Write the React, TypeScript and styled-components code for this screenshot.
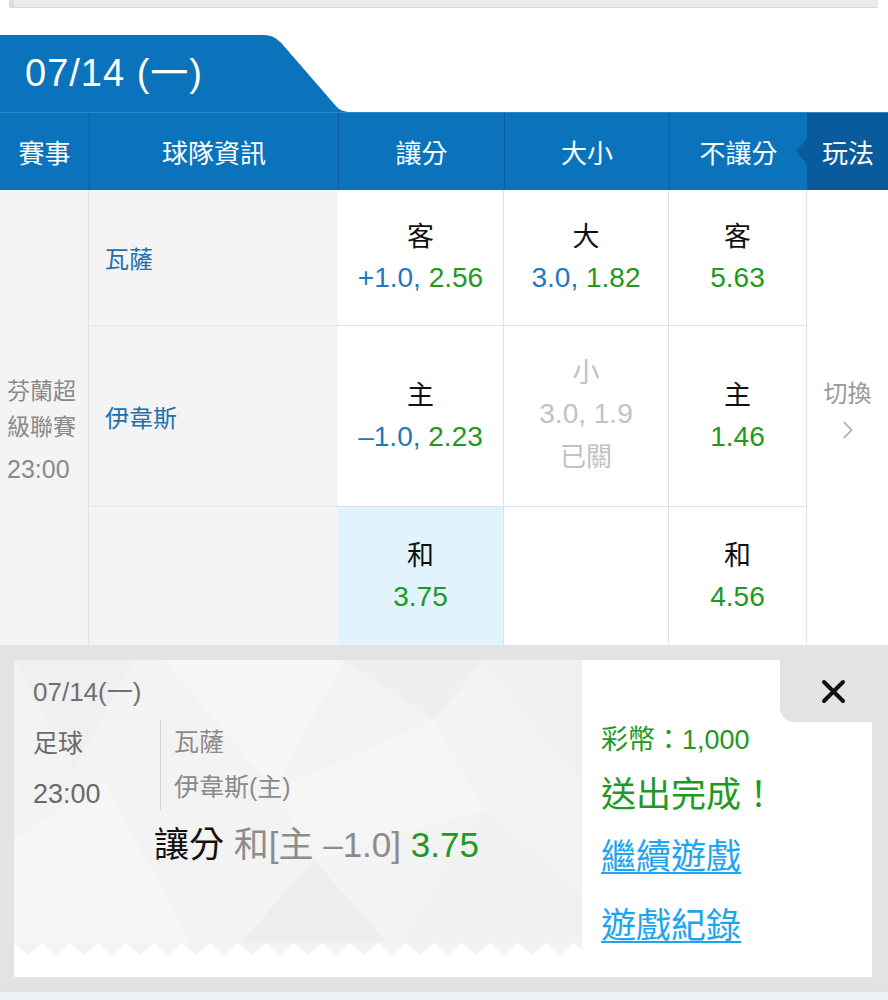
import React from "react";
import styled, { createGlobalStyle } from "styled-components";
import { ChevronRight } from "lucide-react";

const BLUE = "#0b73bc";
const DARK_BLUE = "#0a5b9c";
const GREEN = "#1e9a22";
const LINE = "#dde3ea";

const GlobalStyle = createGlobalStyle`
  html, body {
    margin: 0;
    padding: 0;
    background: #fff;
  }
  body {
    font-family: "Liberation Sans", "Noto Sans CJK TC", sans-serif;
    width: 888px;
    height: 1000px;
    overflow: hidden;
  }
`;

const Page = styled.div`
  width: 888px;
  height: 1000px;
  display: flex;
  flex-direction: column;
  background: #fff;
`;

const TopStrip = styled.div`
  margin: 0 10px 0 9px;
  height: 7px;
  background: #ececec;
  border-left: 5px solid #dedede;
  border-bottom: 1px solid #d9d9d9;
`;

const TabRow = styled.div`
  margin-top: 27px;
  height: 77px;
  display: flex;
`;

const DateTab = styled.div`
  width: 237px;
  padding: 0 0 8px 25px;
  background: ${BLUE};
  color: #fff;
  font-size: 38px;
  letter-spacing: 1px;
  display: flex;
  align-items: center;
`;

const HeaderRow = styled.div`
  display: grid;
  grid-template-columns: 89px 249px 166px 165px 138px 81px;
  height: 78px;
  background: ${BLUE};
  border-top: 1px solid #2a86c8;
  box-sizing: border-box;
`;

const HeadCell = styled.div<{ $dark?: boolean }>`
  position: relative;
  display: flex;
  align-items: center;
  justify-content: center;
  color: #fff;
  font-size: 26px;
  background: ${(p) => (p.$dark ? DARK_BLUE : "transparent")};
  & + & {
    border-left: 1px solid ${(p) => (p.$dark ? DARK_BLUE : "#5aa2d8")};
  }
`;

const Notch = styled.span`
  position: absolute;
  left: -12px;
  top: 24px;
  width: 0;
  height: 0;
  border-top: 14px solid transparent;
  border-bottom: 14px solid transparent;
  border-right: 12px solid ${DARK_BLUE};
`;

const Board = styled.div`
  display: grid;
  grid-template-columns: 89px 249px 166px 165px 138px 81px;
  grid-template-rows: 136px 181px 138px;
`;

const LeagueCell = styled.div`
  grid-column: 1;
  grid-row: 1 / 4;
  background: #f4f4f4;
  border-right: 1px solid ${LINE};
  display: flex;
  flex-direction: column;
  justify-content: center;
  padding: 24px 0 0 7px;
  color: #8a8a8a;
  font-size: 23px;
  line-height: 36px;
`;

const LeagueTime = styled.div`
  margin-top: 6px;
  font-size: 25px;
`;

const TeamCell = styled.div<{ $row: number }>`
  grid-column: 2;
  grid-row: ${(p) => p.$row};
  background: #f4f4f4;
  border-bottom: ${(p) => (p.$row < 3 ? `1px solid ${LINE}` : "none")};
  display: flex;
  align-items: center;
  padding-left: 16px;
  color: #2271ae;
  font-size: 24px;
`;

const OddsCell = styled.div<{ $row: number; $col: number; $hl?: boolean }>`
  grid-column: ${(p) => p.$col};
  grid-row: ${(p) => p.$row};
  background: ${(p) => (p.$hl ? "#e1f3fc" : "#fff")};
  border-right: 1px solid ${LINE};
  border-bottom: ${(p) => (p.$row < 3 ? `1px solid ${LINE}` : "none")};
  display: flex;
  flex-direction: column;
  align-items: center;
  justify-content: center;
  gap: 5px;
`;

const Pick = styled.div<{ $off?: boolean }>`
  font-size: 27px;
  line-height: 36px;
  color: ${(p) => (p.$off ? "#c2c2c2" : "#111")};
`;

const Price = styled.div<{ $off?: boolean }>`
  font-size: 28px;
  line-height: 36px;
  color: ${(p) => (p.$off ? "#c2c2c2" : GREEN)};
`;

const Line = styled.span`
  color: #1f78bd;
`;

const ClosedTag = styled.div`
  font-size: 26px;
  line-height: 40px;
  color: #c2c2c2;
`;

const SwitchCell = styled.div`
  grid-column: 6;
  grid-row: 1 / 4;
  background: #fff;
  display: flex;
  flex-direction: column;
  align-items: center;
  justify-content: center;
  padding-bottom: 16px;
  color: #9a9a9a;
  font-size: 24px;
  gap: 6px;
`;

const Panel = styled.div`
  flex: 1;
  background: #e3e3e3;
  padding: 15px 16px 14px 14px;
  display: flex;
`;

const Ticket = styled.div`
  flex: 1;
  display: flex;
  background: #fff;
`;

const Stub = styled.div`
  width: 568px;
  display: flex;
  flex-direction: column;
`;

const StubBody = styled.div`
  position: relative;
  flex: 1;
  background: #f3f3f3;
  overflow: hidden;
  padding: 16px 0 0 19px;
`;

const Facets = styled.svg`
  position: absolute;
  inset: 0;
`;

const StubContent = styled.div`
  position: relative;
`;

const StubDate = styled.div`
  font-size: 26px;
  line-height: 32px;
  color: #707070;
`;

const MatchRow = styled.div`
  display: flex;
  margin-top: 12px;
  height: 92px;
`;

const SportCol = styled.div`
  width: 127px;
  color: #6a6a6a;
  font-size: 25px;
  line-height: 48px;
  margin-top: -1px;
`;

const StubTime = styled.div`
  font-size: 27px;
  margin-top: 3px;
`;

const TeamsCol = styled.div`
  border-left: 1px solid #d6d6d6;
  padding-left: 13px;
  height: 90px;
  color: #8a8a8a;
  font-size: 25px;
  line-height: 45px;
`;

const BetLine = styled.div`
  margin-top: 12px;
  padding-left: 121px;
  font-size: 35px;
  line-height: 42px;
  color: #111;
`;

const Muted = styled.span`
  color: #8c8c8c;
`;

const Good = styled.span`
  color: ${GREEN};
`;

const Zigzag = styled.svg`
  display: block;
  height: 14px;
`;

const StubFoot = styled.div`
  height: 20px;
`;

const Receipt = styled.div`
  position: relative;
  flex: 1;
  padding: 62px 0 0 19px;
  display: flex;
  flex-direction: column;
`;

const CloseTab = styled.div`
  position: absolute;
  top: 0;
  right: 0;
  width: 92px;
  height: 62px;
  background: #e3e3e3;
  border-bottom-left-radius: 14px;
  display: flex;
  align-items: center;
  justify-content: center;
  padding-left: 14px;
  box-sizing: border-box;
`;

const Balance = styled.div`
  font-size: 27px;
  line-height: 36px;
  color: ${GREEN};
`;

const Done = styled.div`
  margin-top: 15px;
  font-size: 35px;
  line-height: 44px;
  color: ${GREEN};
`;

const ActionLink = styled.a<{ $gap: number }>`
  margin-top: ${(p) => p.$gap}px;
  font-size: 35px;
  line-height: 44px;
  color: #1ea5ee;
  text-decoration: underline;
  text-decoration-thickness: 2px;
  text-underline-offset: 3px;
  align-self: flex-start;
  cursor: pointer;
`;

const Footer = styled.div`
  height: 8px;
  background: #eef2f5;
  border-top: 1px solid #d8dde2;
`;

const teeth = () => {
  let d = "M0 0 ";
  for (let x = 0; x < 568; x += 28) {
    d += `L${x + 14} 12 L${x + 28} 0 `;
  }
  return d + "Z";
};

export default function App() {
  return (
    <Page>
      <GlobalStyle />
      <TopStrip />

      <TabRow>
        <DateTab>07/14 (一)</DateTab>
        <svg width="88" height="77" viewBox="0 0 88 77">
          <path
            d="M0 0 H2 C10 0 16 4 21 10 L73 70 C77 75 82 77 88 77 H0 Z"
            fill={BLUE}
          />
        </svg>
      </TabRow>

      <HeaderRow>
        <HeadCell>賽事</HeadCell>
        <HeadCell>球隊資訊</HeadCell>
        <HeadCell>讓分</HeadCell>
        <HeadCell>大小</HeadCell>
        <HeadCell>不讓分</HeadCell>
        <HeadCell $dark>
          <Notch />
          玩法
        </HeadCell>
      </HeaderRow>

      <Board>
        <LeagueCell>
          <div>芬蘭超</div>
          <div>級聯賽</div>
          <LeagueTime>23:00</LeagueTime>
        </LeagueCell>

        <TeamCell $row={1}>瓦薩</TeamCell>
        <TeamCell $row={2}>伊韋斯</TeamCell>
        <TeamCell $row={3} />

        <OddsCell $row={1} $col={3}>
          <Pick>客</Pick>
          <Price>
            <Line>+1.0,</Line> 2.56
          </Price>
        </OddsCell>
        <OddsCell $row={1} $col={4}>
          <Pick>大</Pick>
          <Price>
            <Line>3.0,</Line> 1.82
          </Price>
        </OddsCell>
        <OddsCell $row={1} $col={5}>
          <Pick>客</Pick>
          <Price>5.63</Price>
        </OddsCell>

        <OddsCell $row={2} $col={3}>
          <Pick>主</Pick>
          <Price>
            <Line>–1.0,</Line> 2.23
          </Price>
        </OddsCell>
        <OddsCell $row={2} $col={4}>
          <Pick $off>小</Pick>
          <Price $off>3.0, 1.9</Price>
          <ClosedTag>已關</ClosedTag>
        </OddsCell>
        <OddsCell $row={2} $col={5}>
          <Pick>主</Pick>
          <Price>1.46</Price>
        </OddsCell>

        <OddsCell $row={3} $col={3} $hl>
          <Pick>和</Pick>
          <Price>3.75</Price>
        </OddsCell>
        <OddsCell $row={3} $col={4} />
        <OddsCell $row={3} $col={5}>
          <Pick>和</Pick>
          <Price>4.56</Price>
        </OddsCell>

        <SwitchCell>
          <div>切換</div>
          <ChevronRight size={30} strokeWidth={1.4} color="#a8a8a8" />
        </SwitchCell>
      </Board>

      <Panel>
        <Ticket>
          <Stub>
            <StubBody>
              <Facets width="568" height="290" viewBox="0 0 568 290">
                <polygon points="0,0 120,0 60,110" fill="#f0f0f0" />
                <polygon points="150,0 330,0 260,130" fill="#f6f6f6" />
                <polygon points="330,0 470,0 420,60" fill="#efefef" />
                <polygon points="470,0 568,0 568,120 520,70" fill="#f1f1f1" />
                <polygon points="0,180 90,120 180,290 0,290" fill="#f6f6f6" />
                <polygon points="220,290 300,200 380,290" fill="#eeeeee" />
                <polygon points="380,290 470,150 568,230 568,290" fill="#f1f1f1" />
                <polygon points="260,130 420,60 470,150 300,200" fill="#f5f5f5" />
              </Facets>
              <StubContent>
                <StubDate>07/14(一)</StubDate>
                <MatchRow>
                  <SportCol>
                    <div>足球</div>
                    <StubTime>23:00</StubTime>
                  </SportCol>
                  <TeamsCol>
                    <div>瓦薩</div>
                    <div>伊韋斯(主)</div>
                  </TeamsCol>
                </MatchRow>
                <BetLine>
                  讓分 <Muted>和[主 –1.0]</Muted> <Good>3.75</Good>
                </BetLine>
              </StubContent>
            </StubBody>
            <Zigzag width="568" viewBox="0 0 568 14">
              <path d={teeth()} fill="#f3f3f3" />
            </Zigzag>
            <StubFoot />
          </Stub>

          <Receipt>
            <CloseTab>
              <svg width="25" height="25" viewBox="0 0 25 25">
                <path
                  d="M3 3 L22 22 M22 3 L3 22"
                  stroke="#111"
                  strokeWidth="4"
                  strokeLinecap="round"
                />
              </svg>
            </CloseTab>
            <Balance>彩幣：1,000</Balance>
            <Done>送出完成！</Done>
            <ActionLink $gap={18}>繼續遊戲</ActionLink>
            <ActionLink $gap={25}>遊戲紀錄</ActionLink>
          </Receipt>
        </Ticket>
      </Panel>
      <Footer />
    </Page>
  );
}
